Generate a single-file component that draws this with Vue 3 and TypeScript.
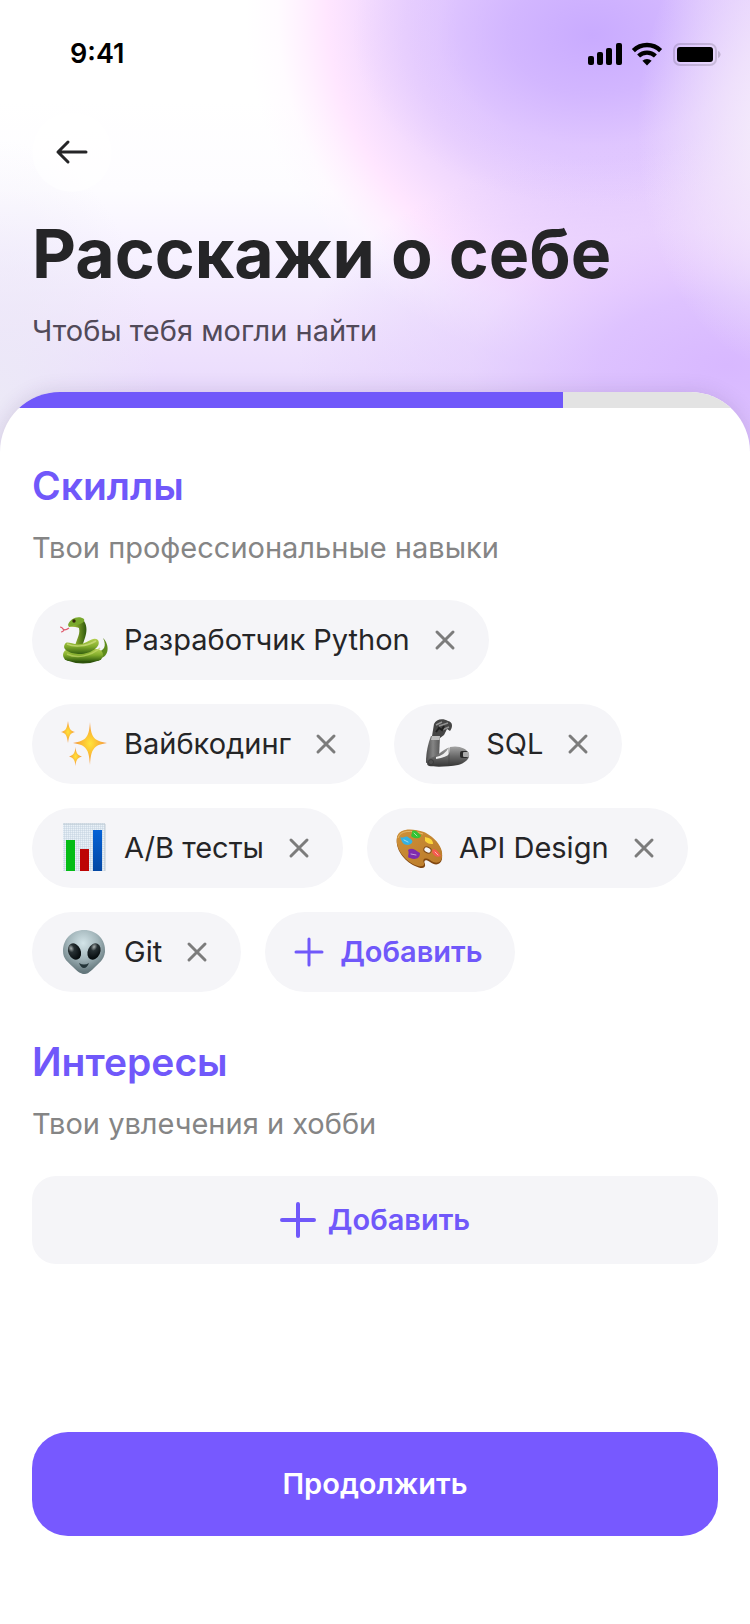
<script setup lang="ts">
import { ref } from 'vue'

type Icon = 'snake' | 'sparkles' | 'arm' | 'chart' | 'palette' | 'alien'

interface Skill {
  id: number
  icon: Icon
  label: string
}

const progress = ref(75)

const skills = ref<Skill[]>([
  { id: 1, icon: 'snake', label: 'Разработчик Python' },
  { id: 2, icon: 'sparkles', label: 'Вайбкодинг' },
  { id: 3, icon: 'arm', label: 'SQL' },
  { id: 4, icon: 'chart', label: 'A/B тесты' },
  { id: 5, icon: 'palette', label: 'API Design' },
  { id: 6, icon: 'alien', label: 'Git' },
])

function removeSkill(id: number): void {
  skills.value = skills.value.filter((skill) => skill.id !== id)
}
</script>

<template>
  <div class="page">
    <header class="hero">
      <div class="status">
        <span class="time">9:41</span>
        <div class="status-icons">
          <svg class="signal" width="34" height="22" viewBox="0 0 34 22" aria-hidden="true">
            <rect x="0" y="13" width="6" height="9" rx="2" />
            <rect x="9" y="9" width="6" height="13" rx="2" />
            <rect x="18" y="5" width="6" height="17" rx="2" />
            <rect x="28" y="0" width="6" height="22" rx="2" />
          </svg>
          <svg class="wifi" width="32" height="24" viewBox="0 0 32 24" aria-hidden="true">
            <path d="M2.4 8.6a19.5 19.5 0 0 1 27.2 0" fill="none" stroke="#000" stroke-width="4.4" />
            <path d="M7.6 14a12 12 0 0 1 16.8 0" fill="none" stroke="#000" stroke-width="4.2" />
            <path d="M16 23.5l-4.6-4.7a6.6 6.6 0 0 1 9.2 0z" />
          </svg>
          <svg class="battery" width="50" height="24" viewBox="0 0 50 24" aria-hidden="true">
            <rect x="2" y="2" width="42" height="21" rx="6" fill="none" stroke="#000" stroke-opacity=".14" stroke-width="2" />
            <rect x="5" y="5" width="36" height="15" rx="3" />
            <path d="M46 9v7c1.6-.6 2.6-2 2.6-3.5S47.6 9.6 46 9z" fill-opacity=".16" />
          </svg>
        </div>
      </div>
      <button class="back" type="button" aria-label="Назад">
        <svg width="34" height="26" viewBox="0 0 34 26" aria-hidden="true">
          <path d="M13 3L3 13l10 10M3 13h28" />
        </svg>
      </button>
      <h1>Расскажи о себе</h1>
      <p class="lead">Чтобы тебя могли найти</p>
    </header>

    <main class="sheet">
      <div class="progress" role="progressbar" aria-label="Заполнение профиля" :aria-valuenow="progress" aria-valuemin="0" aria-valuemax="100">
        <div class="progress-fill" :style="{ width: progress + '%' }"></div>
      </div>

      <section class="block">
        <h2>Скиллы</h2>
        <p class="hint">Твои профессиональные навыки</p>
        <ul class="chips">
          <li v-for="skill in skills" :key="skill.id" class="chip">
            <svg class="emoji" width="48" height="48" viewBox="0 0 48 48" aria-hidden="true">
              <g v-if="skill.icon === 'snake'">
                <defs>
                  <linearGradient id="snakeBody" x1="0" y1="0" x2="0" y2="1">
                    <stop offset="0" stop-color="#b4cf50" />
                    <stop offset=".5" stop-color="#83ad2c" />
                    <stop offset="1" stop-color="#35600f" />
                  </linearGradient>
                  <linearGradient id="snakeNeck" x1="0" y1="0" x2="1" y2="0">
                    <stop offset="0" stop-color="#cfd986" />
                    <stop offset=".4" stop-color="#86a72c" />
                    <stop offset="1" stop-color="#2e570d" />
                  </linearGradient>
                </defs>
                <path d="M9 12Q5 15 3 13Q2 11 0 11M4 14Q3 16 1 16" fill="none" stroke="#e05a6d" stroke-width="1.2" />
                <path d="M40 42C49 41 50 29 43 22C47 30 44 35 37 36z" fill="#5f8c1d" />
                <ellipse cx="23" cy="40" rx="19" ry="7.5" fill="#2e540c" />
                <rect x="3" y="33" width="40" height="12" rx="6" fill="url(#snakeBody)" />
                <path d="M15 34C14 26 21 20 19 12C16 10 11 12 9 10C11 4 20 1 24 5C31 16 21 27 22 35z" fill="url(#snakeNeck)" />
                <path d="M8 9C10 2 19 -1 24 3C26 8 15 9 9 11z" fill="#79a92e" />
                <path d="M5 28C7 24 12 29 21 28C28 27 33 20 38 24C42 31 30 38 20 38C11 38 1 34 5 28z" fill="url(#snakeBody)" />
                <path d="M7 28C14 31 25 31 36 25" fill="none" stroke="#cbdc79" stroke-width="1.5" stroke-opacity=".8" />
                <path d="M7 38C17 43 31 40 40 32" fill="none" stroke="#c1d667" stroke-width="1.5" stroke-opacity=".7" />
                <circle cx="14" cy="5" r="1.7" fill="#35240a" />
              </g>
              <g v-else-if="skill.icon === 'sparkles'">
                <defs>
                  <radialGradient id="spark">
                    <stop offset="0" stop-color="#ffe43c" />
                    <stop offset=".3" stop-color="#fdcb35" />
                    <stop offset="1" stop-color="#f4923f" />
                  </radialGradient>
                </defs>
                <g fill="url(#spark)">
                  <path d="M30 2C31 16 33 21 47 23C33 25 31 30 30 45C29 30 27 25 13 23C27 21 29 16 30 2z" />
                  <path d="M8 1C9 8 10 11 15 12C10 13 9 16 8 23C7 16 6 13 1 12C6 11 7 8 8 1z" />
                  <path d="M15.5 27C16 33 17.5 35 22 36.5C17.5 38 16 40 15.5 46C15 40 13.5 38 9 36.5C13.5 35 15 33 15.5 27z" />
                </g>
              </g>
              <g v-else-if="skill.icon === 'arm'">
                <defs>
                  <linearGradient id="armFore" x1="0" y1="0" x2="1" y2="0">
                    <stop offset="0" stop-color="#4a4a4a" />
                    <stop offset=".5" stop-color="#858585" />
                    <stop offset="1" stop-color="#565656" />
                  </linearGradient>
                  <linearGradient id="armUpper" x1="0" y1="0" x2="0" y2="1">
                    <stop offset="0" stop-color="#a5a5a5" />
                    <stop offset=".5" stop-color="#686868" />
                    <stop offset="1" stop-color="#353535" />
                  </linearGradient>
                </defs>
                <path d="M10 16L12 4C14-1 21-2 26 1C31 2 31 7 28 11L25 9L22 15L18 18z" fill="#454545" />
                <path d="M14 5L20 2M17 6L26 3M20 10L27 7" stroke="#929292" stroke-width="1.5" />
                <path d="M14 12L17 8L20 10L22 6" fill="none" stroke="#1f1f1f" stroke-width="2" />
                <path d="M9 16H18L17 38L4 43C4 32 6 24 9 16z" fill="url(#armFore)" />
                <path d="M10 16H18L17.5 20H9z" fill="#bcbcbc" />
                <path d="M5 39C15 37 20 30 28 27C36 25 45 28 47 34C48 39 43 43 36 45C26 47 12 47 7 46Q4 45 5 39z" fill="url(#armUpper)" />
                <path d="M14 37Q23 35 27 27Q29 26 27 34Q25 37 14 39z" fill="#ededed" />
                <path d="M27 28V46" stroke="#363636" stroke-width=".8" stroke-opacity=".6" />
                <circle cx="9" cy="42" r="2.5" fill="#505050" stroke="#333" stroke-width=".6" />
                <rect x="38" y="31" width="8" height="7" rx="2" fill="#2a2a2a" />
                <rect x="41" y="32" width="6" height="5" rx="1" fill="#ababab" />
              </g>
              <g v-else-if="skill.icon === 'chart'">
                <defs>
                  <linearGradient id="barBlue" x1="0" y1="0" x2="0" y2="1">
                    <stop offset="0" stop-color="#0562d6" />
                    <stop offset="1" stop-color="#0447a3" />
                  </linearGradient>
                  <pattern id="chartGrid" width="2" height="2" patternUnits="userSpaceOnUse">
                    <rect width="2" height="2" fill="#e9f1f8" />
                    <path d="M0 0H2M0 0V2" stroke="#bccbd9" stroke-width=".8" />
                  </pattern>
                </defs>
                <rect x="3" y="-1" width="42" height="48" fill="url(#chartGrid)" />
                <path d="M3 0H45V47" fill="none" stroke="#c2cdd6" stroke-width="1" />
                <rect x="6" y="16" width="9" height="31" fill="#04bd17" />
                <rect x="20" y="25" width="9" height="22" fill="#bd0404" />
                <rect x="33" y="6" width="9" height="41" fill="url(#barBlue)" />
              </g>
              <g v-else-if="skill.icon === 'palette'">
                <defs>
                  <linearGradient id="wood" x1="0" y1="0" x2="1" y2="1">
                    <stop offset="0" stop-color="#cf9138" />
                    <stop offset="1" stop-color="#b97a2a" />
                  </linearGradient>
                </defs>
                <path d="M2 14C4 5 17 4 29 9C40 14 49 25 47 35C46 41 40 42 35 38C31 35 28 36 30 40C31 45 26 45 20 42C9 37 0 25 2 14z" fill="#80460f" />
                <path d="M2 13C4 4 17 4 29 8C40 13 49 24 47 33C46 40 40 40 35 36C30 33 27 35 29 39C30 43 25 43 20 41C9 36 0 24 2 13z" fill="url(#wood)" />
                <path d="M3 14C5 6 17 6 28 10" fill="none" stroke="#e5b869" stroke-width="1" />
                <ellipse cx="32.5" cy="26" rx="3.8" ry="2.8" fill="#f5f5f8" stroke="#7b4613" stroke-width="1" transform="rotate(25 32.5 26)" />
                <path d="M5 13C9 15 11 10 14 14C20 17 17 20 13 21C7 21 7 17 5 13z" fill="#35b2e2" />
                <path d="M17 7C22 5 23 10 26 11C26 15 21 15 17 13C15 11 18 9 17 7z" fill="#35c333" />
                <path d="M30 13C34 14 38 15 38 20C35 20 33 20 30 17z" fill="#fbd53a" />
                <path d="M13 26C17 23 20 26 25 29C25 35 20 36 15 34C11 34 15 30 13 26z" fill="#7f2bae" />
                <path d="M38 25C42 25 44 29 46 32C42 34 39 32 37 28z" fill="#f55b50" />
                <path d="M9 16L13 18M19 9L22 12M16 30L21 31M40 28L43 31" stroke="#fff" stroke-width="1" stroke-opacity=".55" stroke-linecap="round" />
              </g>
              <g v-else>
                <defs>
                  <radialGradient id="alienSkin" cx=".48" cy=".3" r=".65">
                    <stop offset="0" stop-color="#d3e4e8" />
                    <stop offset=".55" stop-color="#a2b5ba" />
                    <stop offset="1" stop-color="#64777c" />
                  </radialGradient>
                  <radialGradient id="alienEye" cx=".35" cy=".25" r=".7">
                    <stop offset="0" stop-color="#aab1b1" />
                    <stop offset=".35" stop-color="#273033" />
                    <stop offset="1" stop-color="#080e10" />
                  </radialGradient>
                </defs>
                <path d="M24 2C37 2 46 12 45 24C44 32 39 35 34 40C29 45 27 46 24 46C21 46 18 44 13 39C8 34 3 31 3 23C3 11 12 2 24 2z" fill="url(#alienSkin)" />
                <ellipse cx="14.5" cy="23.5" rx="6.2" ry="8.5" fill="url(#alienEye)" transform="rotate(-24 14.5 23.5)" />
                <ellipse cx="34" cy="23.5" rx="6.2" ry="8.5" fill="url(#alienEye)" transform="rotate(24 34 23.5)" />
                <path d="M19 35Q24 38 29 35Q27 40 24 40Q21 40 19 35z" fill="#233438" />
              </g>
            </svg>
            <span class="chip-label">{{ skill.label }}</span>
            <button class="remove" type="button" :aria-label="'Удалить ' + skill.label" @click="removeSkill(skill.id)">
              <svg width="24" height="24" viewBox="0 0 24 24" aria-hidden="true">
                <path d="M4 4l16 16M20 4L4 20" />
              </svg>
            </button>
          </li>
          <li>
            <button class="chip add" type="button">
              <svg width="32" height="32" viewBox="0 0 32 32" aria-hidden="true">
                <path d="M16 3v26M3 16h26" />
              </svg>
              Добавить
            </button>
          </li>
        </ul>
      </section>

      <section class="block interests">
        <h2>Интересы</h2>
        <p class="hint">Твои увлечения и хобби</p>
        <button class="add wide" type="button">
          <svg width="36" height="36" viewBox="0 0 36 36" aria-hidden="true">
            <path d="M18 2v32M2 18h32" />
          </svg>
          Добавить
        </button>
      </section>

      <footer class="footer">
        <button class="continue" type="button">Продолжить</button>
      </footer>
    </main>
  </div>
</template>

<style>
body {
  margin: 0;
  background: #fff;
}
</style>

<style scoped>
.page {
  box-sizing: border-box;
  display: flex;
  flex-direction: column;
  min-height: 100vh;
  font-family: Inter, "Liberation Sans", sans-serif;
  font-size: 29px;
  line-height: 40px;
  color: #252527;
}

h1,
h2,
p,
ul {
  margin: 0;
  padding: 0;
}

button {
  margin: 0;
  padding: 0;
  border: 0;
  background: none;
  font: inherit;
  color: inherit;
  cursor: pointer;
}

.hero {
  padding: 0 32px 101px;
  background:
    radial-gradient(ellipse 150px 240px at 105% 130px, #f6f0fb 0, #f3e8fbcc 40%, #f3e7fb00 100%),
    radial-gradient(ellipse 240px 170px at 79% 35px, #c9abff 0, #ceb1ffcc 35%, #d8bcff66 65%, #e2caff00 100%),
    radial-gradient(ellipse 430px 230px at 97% 365px, #d8b8ff 0, #dbbeffe6 30%, #e2cafe88 60%, #e6d0fe00 100%),
    radial-gradient(circle at 81% 10px, #e2caff 0, #e4ccff 150px, #ebd3fe 200px, #f4dcfe 240px, #ffe6ff 280px, #ffeeffcc 305px, #fff6ff66 330px, #ffffff00 362px),
    radial-gradient(ellipse 160px 260px at 0 400px, #ece9f7 0, #ece9f700 100%),
    linear-gradient(#fff 100px, #fdfcff 190px, #f7f2ff 250px, #f1e6fd 320px, #e9dafd 400px);
}

.status {
  display: flex;
  align-items: center;
  justify-content: space-between;
  height: 108px;
  padding-left: 38px;
}

.time {
  font-size: 27px;
  font-weight: 600;
  color: #000;
}

.status-icons {
  display: flex;
  align-items: center;
  gap: 9px;
}

.battery {
  margin-right: -4px;
}

.back {
  display: flex;
  align-items: center;
  justify-content: center;
  width: 80px;
  height: 80px;
  margin-top: 4px;
  border-radius: 50%;
  background: #ffffff80;
}

.back svg,
.remove svg,
.add svg {
  display: block;
  fill: none;
  stroke: currentColor;
  stroke-width: 3;
  stroke-linecap: round;
  stroke-linejoin: round;
}

h1 {
  margin-top: 21px;
  font-size: 68px;
  font-weight: 700;
  line-height: 80px;
}

.lead {
  margin-top: 18px;
  color: #514a59;
}

.sheet {
  display: flex;
  flex: 1;
  flex-direction: column;
  margin-top: -60px;
  border-radius: 60px 60px 0 0;
  overflow: hidden;
  background: #fff;
  box-shadow: 0 0 20px #3c285a26;
}

.progress {
  height: 16px;
  background: #e3e3e3;
}

.progress-fill {
  height: 100%;
  background: #7058fa;
}

.block {
  padding: 54px 32px 0;
}

.interests {
  padding-top: 46px;
}

h2 {
  font-size: 39px;
  font-weight: 600;
  line-height: 48px;
  color: #7058fa;
}

.hint {
  margin-top: 18px;
  color: #858585;
}

.chips {
  display: flex;
  flex-wrap: wrap;
  gap: 24px;
  margin-top: 32px;
  list-style: none;
}

.chip {
  display: flex;
  align-items: center;
  box-sizing: border-box;
  height: 80px;
  padding: 0 32px 0 28px;
  border-radius: 40px;
  background: #f5f5f8;
}

.emoji {
  flex: none;
  overflow: visible;
}

.chip-label {
  margin: 0 23px 0 16px;
  white-space: nowrap;
}

.remove {
  color: #7c7c7c;
}

.add {
  font-weight: 600;
  color: #7058fa;
}

.chip.add {
  gap: 15px;
}

.wide {
  display: flex;
  align-items: center;
  justify-content: center;
  gap: 12px;
  width: 100%;
  height: 88px;
  margin-top: 32px;
  border-radius: 24px;
  background: #f5f5f8;
}

.wide svg {
  stroke-width: 4;
}

.footer {
  margin-top: auto;
  padding: 32px 32px 88px;
}

.continue {
  width: 100%;
  height: 104px;
  border-radius: 36px;
  background: #7759ff;
  font-weight: 600;
  color: #fff;
}
</style>
